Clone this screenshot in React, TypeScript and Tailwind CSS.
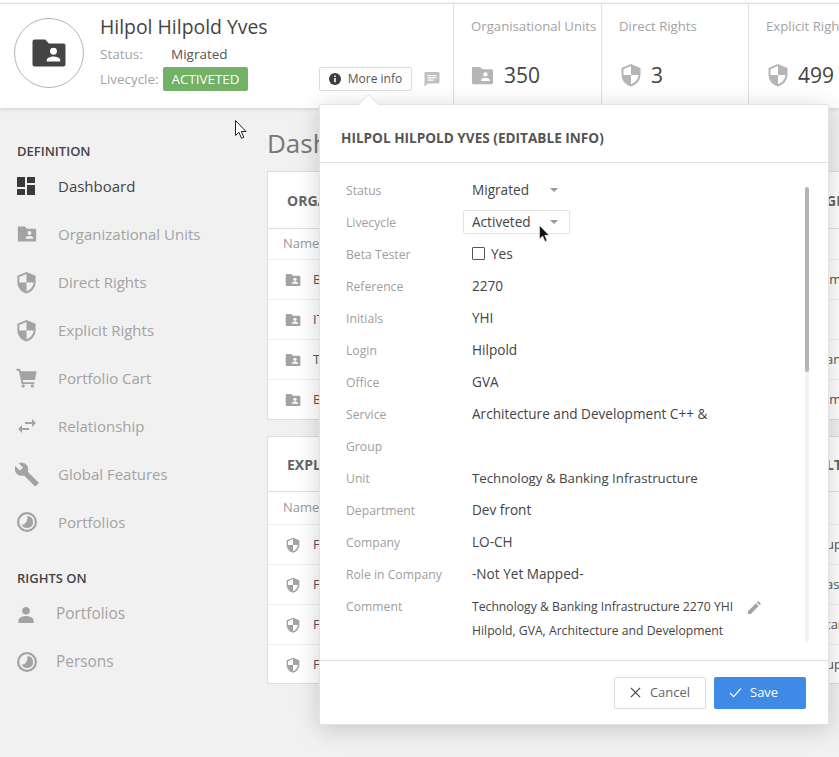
const FONT = "font-['Open_Sans',sans-serif]"

function FolderUser({ className }: { className?: string }) {
  return (
    <svg viewBox="0 0 24 24" className={className} fill="currentColor">
      <path d="M2.5 3h7l2.4 2.6H21.5c1 0 1.5.6 1.5 1.5V19.5c0 1-.6 1.5-1.5 1.5h-19C1.500 21 1 20.400 1 19.500V4.500C1 3.600 1.500 3 2.500 3z" />
      <circle cx="15" cy="10.800" r="2.300" fill="var(--hole, white)" />
      <path d="M10.500 17.700v-1c0-1.500 3-2.300 4.500-2.300s4.500.8 4.500 2.300v1z" fill="var(--hole, white)" />
    </svg>
  )
}

function Shield({ className }: { className?: string }) {
  return (
    <svg viewBox="0 0 24 24" className={className} fill="currentColor">
      <path d="M12 1 2.500 5v6.500C2.500 17.300 6.500 22.100 12 23.500c5.500-1.400 9.500-6.200 9.500-12V5L12 1zm0 11H19.500c-.5 4.200-3.400 7.900-7.500 9.200V12H4.500V6.300L12 3.100V12z" />
    </svg>
  )
}

function Dash({ className }: { className?: string }) {
  return (
    <svg viewBox="0 0 18 18" className={className} fill="currentColor">
      <path d="M0 0h8v10H0zM0 12h8v6H0zM10 0h8v6h-8zM10 8h8v10h-8z" />
    </svg>
  )
}

function Cart({ className }: { className?: string }) {
  return (
    <svg viewBox="0 0 24 24" className={className} fill="currentColor">
      <path d="M0 1h4.200l1 3H24l-1.800 10.500H7.500l.5 2.500h13.500v2.200H6.200L2.800 3.200H0z" />
      <circle cx="8" cy="21.500" r="2" />
      <circle cx="19" cy="21.500" r="2" />
    </svg>
  )
}

function Swap({ className }: { className?: string }) {
  return (
    <svg viewBox="0 0 18 14" className={className} fill="currentColor">
      <path d="M7 3h7V0l4 4-4 4V5H7zM11 9H4V6l-4 4 4 4v-3h7z" />
    </svg>
  )
}

function Wrench({ className }: { className?: string }) {
  return (
    <svg viewBox="0 0 24 24" className={className} fill="currentColor">
      <path d="M23.300 20.200 12.800 9.700c.9-2.400.4-5.200-1.600-7.200C9.100.4 6-.1 3.500 1.100l4.500 4.500-3 3-4.600-4.500C-.8 6.600-.3 9.700 1.800 11.800c2 2 4.800 2.500 7.200 1.600l10.500 10.500c.4.400 1.100.4 1.500 0l2.300-2.300c.5-.4.500-1.100 0-1.400z" />
    </svg>
  )
}

function Pie({ className }: { className?: string }) {
  return (
    <svg viewBox="0 0 20 20" className={className} fill="currentColor">
      <path fillRule="evenodd" d="M10 0a10 10 0 1 1 0 20 10 10 0 0 1 0-20zm0 2.200a7.800 7.800 0 1 0 0 15.600 7.800 7.800 0 0 0 0-15.600z" />
      <path d="M10.500 4a6 6 0 1 1-5.900 8.500c3.300.4 6-2.400 5.900-8.500z" />
    </svg>
  )
}

function Person({ className }: { className?: string }) {
  return (
    <svg viewBox="0 0 18 18" className={className} fill="currentColor">
      <circle cx="9" cy="5" r="4" />
      <path d="M1 18v-3c0-3 5.300-4.500 8-4.500s8 1.500 8 4.500v3z" />
    </svg>
  )
}

function Stat({ label, value, icon, width }: { label: string; value: string; icon: React.ReactNode; width: string }) {
  return (
    <div className={`${width} shrink-0 border-l border-[#e0e0e0] pl-[17px] pt-[12px]`}>
      <div className="text-[13.200px] leading-[20px] whitespace-nowrap text-[#a3a3a3]">{label}</div>
      <div className="mt-[24px] flex items-center gap-[10px] text-[#b5b5b5]">
        {icon}
        <span className="text-[21px] leading-[30px] text-[#444]">{value}</span>
      </div>
    </div>
  )
}

function NavItem({ icon, label, active, gap, size }: { icon: React.ReactNode; label: string; active?: boolean; gap?: string; size?: string }) {
  return (
    <div className="flex h-[48px] items-center">
      <div className={`flex ${gap ?? "w-[41px]"} shrink-0 items-center ${active ? "text-[#3a3a3a]" : "text-[#a3a3a3]"}`}>{icon}</div>
      <span className={`${size ?? "text-[15px]"} whitespace-nowrap ${active ? "text-[#444]" : "text-[#a3a3a3]"}`}>{label}</span>
    </div>
  )
}

function Card({ title, titleEnd, rows, rowIcon, className, headH, nameH }: { title: string; titleEnd: string; rows: [string, string][]; rowIcon: React.ReactNode; className?: string; headH: string; nameH: string }) {
  return (
    <div className={`flex overflow-hidden border border-[#dcdcdc] bg-white ${className ?? ""}`}>
      <div className="w-[280px] shrink-0">
        <div className={`flex ${headH} items-center pl-[19px] text-[14px] font-bold text-[#666]`}>{title}</div>
        <div className={`flex ${nameH} items-center border-t border-[#e0e0e0] pl-[15px] text-[13px] text-[#999]`}>Name</div>
        {rows.map(([left], i) => (
          <div key={i} className="flex h-[40px] items-center gap-[12px] border-t border-[#eeeeee] pl-[17px] text-[13px] text-[#555] first:border-[#e0e0e0]">
            {rowIcon}
            <span>{left}</span>
          </div>
        ))}
      </div>
      <div className="flex-1 pl-[278px]">
        <div className={`flex ${headH} items-center text-[14px] font-bold text-[#666]`}>{titleEnd}</div>
        <div className={`${nameH} border-t border-[#e0e0e0]`} />
        {rows.map(([, right], i) => (
          <div key={i} className="flex h-[40px] items-center border-t border-[#eeeeee] text-[13px] text-[#555] whitespace-nowrap first:border-[#e0e0e0]">
            {right}
          </div>
        ))}
      </div>
    </div>
  )
}

function Row({ label, children }: { label: string; children?: React.ReactNode }) {
  return (
    <div className="flex h-[32px] items-center">
      <div className="w-[126px] shrink-0 text-[12.200px] text-[#a0a0a0]">{label}</div>
      <div className="min-w-0 flex-1 pb-[2px] text-[13.600px] text-[#444] whitespace-nowrap">{children}</div>
    </div>
  )
}

function Caret() {
  return <span className="h-0 w-0 border-x-[4px] border-t-[4px] border-x-transparent border-t-[#999]" />
}

export default function App() {
  const folderSm = <FolderUser className="h-[16px] w-[16px] text-[#a3a3a3]" />
  const shieldSm = <Shield className="h-[16px] w-[16px] text-[#a3a3a3]" />
  const shieldTop = <Shield className="-mr-[2px] h-[24px] w-[24px] text-[#b5b5b5]" />
  const shieldNav = <Shield className="-ml-[2px] h-[23px] w-[23px]" />
  return (
    <div className={`${FONT} relative h-[757px] w-[839px] overflow-hidden bg-[#f1f1f1]`}>
      {/* Top bar */}
      <div className="h-[3px] bg-white" />
      <header className="relative z-10 flex h-[105px] border-t border-[#e0e0e0] bg-white shadow-[0_1px_4px_rgba(0,0,0,0.15)]">
        <div className="flex w-[453px] shrink-0">
          <div className="ml-[14px] mt-[14px] flex h-[70px] w-[70px] items-center justify-center rounded-full border border-[#b5b5b5]">
            <FolderUser className="h-[36px] w-[36px] text-[#444]" />
          </div>
          <div className="ml-[16px] mt-[9px]">
            <div className="text-[19.400px] leading-[28px] text-[#444]">Hilpol Hilpold Yves</div>
            <div className="mt-[1px] flex h-[24px] items-center text-[13.500px]">
              <span className="w-[71px] text-[#a3a3a3]">Status:</span>
              <span className="text-[#555]">Migrated</span>
            </div>
            <div className="mt-[1px] flex h-[24px] items-center text-[13.400px]">
              <span className="w-[63px] text-[#a3a3a3]">Livecycle:</span>
              <span className="flex h-[24px] w-[85px] items-center justify-center rounded-[2px] bg-[#72b166] text-white">ACTIVETED</span>
            </div>
          </div>
        </div>
        <Stat label="Organisational Units" value="350" width="w-[148px]" icon={<FolderUser className="h-[23px] w-[23px] text-[#b5b5b5]" />} />
        <Stat label="Direct Rights" value="3" width="w-[147px]" icon={shieldTop} />
        <Stat label="Explicit Rights" value="499" width="w-[148px]" icon={shieldTop} />
      </header>

      {/* Below the bar */}
      <div className="flex">
        <aside className="w-[267px] shrink-0 pl-[17px] pt-[33px]">
          <div className="text-[13px] font-semibold leading-[20px] text-[#444]">DEFINITION</div>
          <div className="mt-[1px]">
            <NavItem active icon={<Dash className="h-[18px] w-[18px]" />} label="Dashboard" />
            <NavItem icon={<FolderUser className="h-[20px] w-[20px] [--hole:#f1f1f1]" />} label="Organizational Units" />
            <NavItem icon={shieldNav} label="Direct Rights" />
            <NavItem icon={shieldNav} label="Explicit Rights" />
            <NavItem icon={<Cart className="-ml-[2px] h-[20px] w-[23px]" />} label="Portfolio Cart" />
            <NavItem icon={<Swap className="ml-[1px] h-[14px] w-[18px]" />} label="Relationship" />
            <NavItem icon={<Wrench className="-ml-[2px] h-[24px] w-[24px]" />} label="Global Features" />
            <NavItem icon={<Pie className="h-[20px] w-[20px]" />} label="Portfolios" />
          </div>
          <div className="mt-[22px] text-[13px] font-semibold leading-[20px] text-[#444]">RIGHTS ON</div>
          <div className="mt-[2px]">
            <NavItem gap="w-[39px]" size="text-[15.400px]" icon={<Person className="h-[17px] w-[18px]" />} label="Portfolios" />
            <NavItem gap="w-[39px]" size="text-[15.400px]" icon={<Pie className="h-[20px] w-[20px]" />} label="Persons" />
          </div>
        </aside>
        <main className="min-w-0 flex-1 pt-[17px]">
          <div className="text-[26px] leading-[36px] text-[#777]">Dashboard</div>
          <Card
            className="mt-[10px] w-[620px]"
            headH="h-[56px]"
            nameH="h-[31px]"
            title="ORGANIZATIONAL UNITS"
            titleEnd="GHTS"
            rowIcon={folderSm}
            rows={[["Banking", "lm"], ["IT", ""], ["Technology", "an"], ["Business", "lm"]]}
          />
          <Card
            className="mt-[16px] h-[248px] w-[620px]"
            headH="h-[54px]"
            nameH="h-[33px]"
            title="EXPLICIT RIGHTS"
            titleEnd="LTI"
            rowIcon={shieldSm}
            rows={[["Full access", "up"], ["Full access", "as"], ["Full access", "tar"], ["Full access", "up"]]}
          />
        </main>
      </div>

      {/* More info button */}
      <div className="absolute left-[319px] top-[67px] z-20 flex h-[24px] w-[93px] items-center justify-center gap-[7px] rounded-[2px] border border-[#dcdcdc] bg-white text-[12px] text-[#555]">
        <svg viewBox="0 0 12 12" className="h-[12px] w-[12px]"><circle cx="6" cy="6" r="6" fill="#3d3d3d" /><path d="M5.200 5h1.600v4.200H5.200zM5.200 2.600h1.600v1.500H5.200z" fill="#fff" /></svg>
        More info
      </div>
      <svg viewBox="0 0 16 16" className="absolute left-[424px] top-[71px] z-20 h-[16px] w-[16px] text-[#c0c0c0]" fill="currentColor">
        <path d="M1.500 1h13c.5 0 1 .5 1 1v9.500c0 .5-.5 1-1 1H4L.5 15.500V2c0-.5.5-1 1-1z" />
        <path d="M3.500 4h9v1.200h-9zM3.500 6.300h9v1.200h-9zM3.500 8.600h6v1.200h-6z" fill="#fff" />
      </svg>

      {/* Popover */}
      <div className="absolute left-[319px] top-[104px] z-30 flex h-[621px] w-[510px] flex-col rounded-[2px] border border-[#e3e3e3] bg-white shadow-[0_4px_24px_rgba(0,0,0,0.18)]">
        <span className="absolute -top-[8px] left-[41px] h-[15px] w-[15px] rotate-45 border-l border-t border-[#e3e3e3] bg-white" />
        <div className="flex h-[58px] shrink-0 items-center border-b border-[#e0e0e0] pl-[21px] pt-[10px] text-[13.600px] font-bold text-[#555]">
          HILPOL HILPOLD YVES (EDITABLE INFO)
        </div>
        <div className="relative h-[497px] shrink-0 overflow-hidden pl-[26px] pt-[12px]">
          <Row label="Status">
            <div className="flex h-[24px] w-[86px] items-center justify-between">Migrated<Caret /></div>
          </Row>
          <Row label="Livecycle">
            <div className="-ml-[9px] flex h-[24px] w-[107px] items-center justify-between rounded-[2px] border border-[#e3e3e3] pl-[8px] pr-[11px]">Activeted<Caret /></div>
          </Row>
          <Row label="Beta Tester">
            <div className="flex items-center gap-[6px]">
              <span className="h-[13px] w-[13px] rounded-[1px] border-[1.500px] border-[#555]" />
              Yes
            </div>
          </Row>
          <Row label="Reference">2270</Row>
          <Row label="Initials">YHI</Row>
          <Row label="Login">Hilpold</Row>
          <Row label="Office">GVA</Row>
          <Row label="Service">Architecture and Development C++ &amp;</Row>
          <Row label="Group" />
          <Row label="Unit"><span className="text-[13.250px]">Technology &amp; Banking Infrastructure</span></Row>
          <Row label="Department">Dev front</Row>
          <Row label="Company">LO-CH</Row>
          <Row label="Role in Company">-Not Yet Mapped-</Row>
          <div className="flex">
            <div className="w-[126px] shrink-0 pt-[7px] text-[12.200px] text-[#a0a0a0]">Comment</div>
            <div className="pt-[4px] text-[12.200px] leading-[24px] text-[#444]">
              <div className="flex items-center gap-[15px]">
                Technology &amp; Banking Infrastructure 2270 YHI
                <svg viewBox="0 0 14 14" className="h-[13px] w-[13px] text-[#a3a3a3]" fill="currentColor">
                  <path d="M0 14v-3L8.500 2.500l3 3L3 14zM9.500 1.500 11 0l3 3-1.500 1.500z" />
                </svg>
              </div>
              <div>Hilpold, GVA, Architecture and Development</div>
            </div>
          </div>
          {/* Scroll track */}
          <div className="absolute right-[19px] top-[24px] h-[455px] w-[4px] rounded-full bg-[#f2f2f2]">
            <div className="h-[185px] w-[4px] rounded-full bg-[#b5b5b5]" />
          </div>
        </div>
        <div className="flex flex-1 items-center justify-end gap-[8px] border-t border-[#e0e0e0] pr-[22px]">
          <button className="flex h-[32px] w-[92px] items-center justify-center gap-[9px] rounded-[2px] border border-[#dcdcdc] text-[13px] text-[#666]">
            <svg viewBox="0 0 12 12" className="h-[11px] w-[11px]" stroke="#444" strokeWidth="1.300" fill="none"><path d="M1 1l10 10M11 1 1 11" /></svg>
            Cancel
          </button>
          <button className="flex h-[32px] w-[92px] items-center gap-[8px] rounded-[2px] bg-[#3f8ae6] pl-[15px] text-[13px] text-white">
            <svg viewBox="0 0 14 12" className="h-[11px] w-[13px]" stroke="#fff" strokeWidth="1.300" fill="none"><path d="M1 6.500 5 10.500 13 1.500" /></svg>
            Save
          </button>
        </div>
      </div>

      {/* Captured mouse cursors */}
      <svg viewBox="0 0 12 20" className="absolute left-[235px] top-[120px] z-40 h-[20px] w-[12px]">
        <path d="M.5.500v15l3.500-3.200 2.500 6 2.300-1-2.500-5.800H11z" fill="#fff" stroke="#222" strokeWidth="1" />
      </svg>
      <svg viewBox="0 0 12 20" className="absolute left-[539px] top-[225px] z-40 h-[18px] w-[11px]">
        <path d="M.5.500v15l3.500-3.200 2.500 6 2.300-1-2.500-5.800H11z" fill="#111" stroke="#fff" strokeWidth="0.600" />
      </svg>
    </div>
  )
}
